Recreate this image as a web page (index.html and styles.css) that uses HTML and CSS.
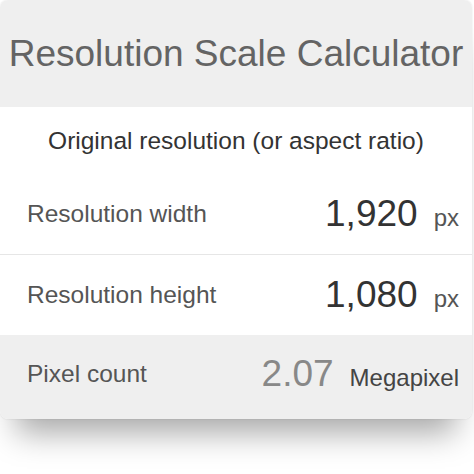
FILE: index.html
```html
<!DOCTYPE html>
<html>
<head>
<meta charset="utf-8">
<link rel="stylesheet" href="styles.css">
</head>
<body>
<div class="card">
  <div class="header"><h1 class="title">Resolution Scale Calculator</h1></div>
  <div class="section">
    <div class="subtitle">Original resolution (or aspect ratio)</div>
    <div class="row">
      <span class="label">Resolution width</span>
      <span class="value"><span class="num">1,920</span><span class="unit">px</span></span>
    </div>
  </div>
  <div class="row row-sep">
    <span class="label">Resolution height</span>
    <span class="value"><span class="num">1,080</span><span class="unit">px</span></span>
  </div>
  <div class="row footer">
    <span class="label">Pixel count</span>
    <span class="value"><span class="num num-light">2.07</span><span class="unit unit-dark">Megapixel</span></span>
  </div>
</div>
</body>
</html>
```

FILE: styles.css
```css
html, body {
  margin: 0;
  padding: 0;
  background: #ffffff;
}
body {
  font-family: "Liberation Sans", Arial, sans-serif;
  width: 474px;
  height: 474px;
  overflow: hidden;
}
.card {
  width: 472px;
  border-radius: 8px;
  background: #ffffff;
  overflow: hidden;
  box-shadow: 0 0 2px rgba(0, 0, 0, 0.12), 0 30px 30px -16px rgba(0, 0, 0, 0.34);
}
.header {
  height: 107px;
  background: #efefef;
  display: flex;
  align-items: center;
  justify-content: center;
}
.title {
  margin: 0;
  font-weight: normal;
  font-size: 37px;
  color: #646464;
}
.section {
  background: #ffffff;
}
.subtitle {
  height: 67px;
  display: flex;
  align-items: center;
  justify-content: center;
  font-size: 24.5px;
  color: #333333;
  padding-top: 1px;
  box-sizing: border-box;
}
.row {
  height: 80px;
  display: flex;
  align-items: center;
  justify-content: space-between;
  padding: 0 13px 0 27px;
  box-sizing: border-box;
}
.row-sep {
  border-top: 1px solid #e6e6e6;
  height: 81px;
}
.label {
  font-size: 24.5px;
  color: #555555;
}
.value {
  display: flex;
  align-items: baseline;
  gap: 16px;
}
.num {
  font-size: 37px;
  color: #333333;
}
.num-light {
  color: #888888;
}
.unit {
  font-size: 24px;
  color: #555555;
}
.unit-dark {
  color: #444444;
}
.footer {
  background: #efefef;
  height: 84px;
  padding-bottom: 6px;
}
```
